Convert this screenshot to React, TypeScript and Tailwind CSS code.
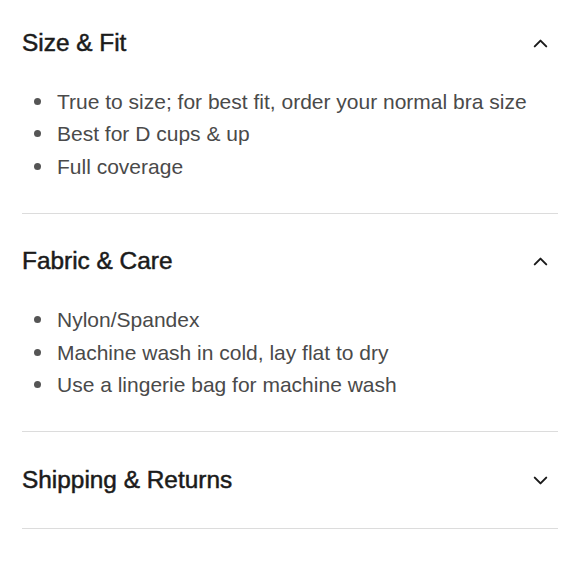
import { ChevronDown, ChevronUp } from "lucide-react";

const SECTIONS = [
  {
    title: "Size & Fit",
    open: true,
    items: ["True to size; for best fit, order your normal bra size", "Best for D cups & up", "Full coverage"],
  },
  {
    title: "Fabric & Care",
    open: true,
    items: ["Nylon/Spandex", "Machine wash in cold, lay flat to dry", "Use a lingerie bag for machine wash"],
  },
  { title: "Shipping & Returns", open: false, items: [] },
];

export default function App() {
  return (
    <div className="min-h-[580px] w-[580px] bg-white px-[22px] font-['Liberation_Sans',Arial,sans-serif]">
      {SECTIONS.map(({ title, open, items }, i) => (
        <section
          key={title}
          className={`border-b border-[#dcdcdc] ${i === 0 ? "pt-[30px]" : "pt-[35px]"} ${open ? "pb-[30px]" : "pb-[35px]"}`}
        >
          <div className="flex h-[26px] items-center justify-between">
            <h2 className="text-[24.4px] font-normal text-[#1b1b1b] [-webkit-text-stroke:0.5px_#1b1b1b]">{title}</h2>
            <span className="mr-[6px] text-[#1b1b1b]">
              {open ? <ChevronUp size={23} strokeWidth={2.1} /> : <ChevronDown size={23} strokeWidth={2.1} />}
            </span>
          </div>
          {open && (
            <ul className="mt-[29px]">
              {items.map((item) => (
                <li key={item} className="flex h-[32.5px] items-center text-[21px] text-[#4a4a4a]">
                  <span className="ml-[12px] mr-[16px] h-[7px] w-[7px] shrink-0 rounded-full bg-[#555]" />
                  {item}
                </li>
              ))}
            </ul>
          )}
        </section>
      ))}
    </div>
  );
}
